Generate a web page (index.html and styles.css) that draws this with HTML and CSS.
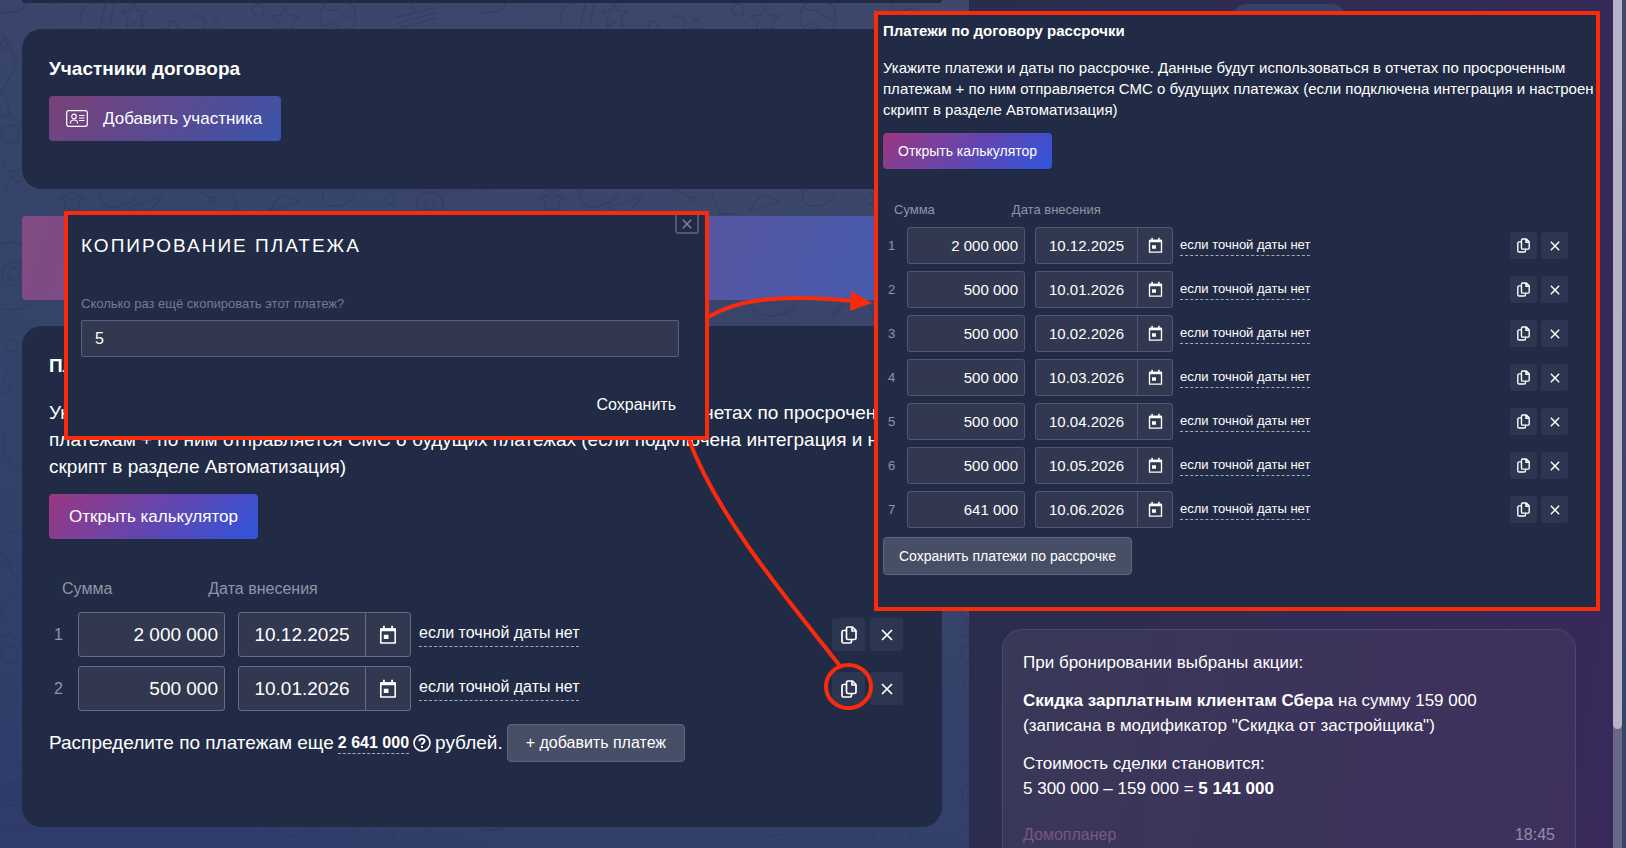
FILE: index.html
```html
<!doctype html>
<html lang="ru">
  <head>
    <meta charset="UTF-8">
    <meta name="viewport" content="width=device-width, initial-scale=1.0">
    <title>Договор рассрочки</title>
    <link rel="stylesheet" href="styles.css">
  </head>
  <body>
    <!-- icon sprite -->
    <svg class="sprite" aria-hidden="true">
      <symbol id="icon-calendar" viewBox="0 0 18 20">
        <path d="M1.800 4h14.400v14H1.800z" fill="none" stroke="currentColor" stroke-width="1.600" stroke-linejoin="round"/>
        <path d="M1.500 3.200h15v3h-15zM4 .8h1.800v3H4zM12.200 .8H14v3h-1.800zM4.800 9.800h4.700v4.200H4.800z" fill="currentColor"/>
      </symbol>
      <symbol id="icon-copy" viewBox="0 0 16 18">
        <path d="M7 1h4.500L15 4.500V12a1.500 1.500 0 0 1-1.500 1.500H7A1.500 1.500 0 0 1 5.500 12V2.500A1.500 1.500 0 0 1 7 1zM11 1.200V5H14.800" fill="none" stroke="currentColor" stroke-width="1.700" stroke-linejoin="round"/>
        <path d="M5.500 4.500h-3A1.500 1.500 0 0 0 1 6v9.500A1.500 1.500 0 0 0 2.500 17H9a1.500 1.500 0 0 0 1.500-1.500v-2" fill="none" stroke="currentColor" stroke-width="1.700" stroke-linejoin="round"/>
      </symbol>
      <symbol id="icon-close" viewBox="0 0 12 12">
        <path d="M1 1l10 10M11 1L1 11" fill="none" stroke="currentColor" stroke-width="1.700"/>
      </symbol>
      <symbol id="icon-card" viewBox="0 0 22 17">
        <g fill="none" stroke="currentColor" stroke-width="1.200" stroke-linecap="round">
          <rect x=".7" y=".7" width="20.600" height="15.600" rx="2"/>
          <circle cx="8" cy="6.500" r="2.300"/>
          <path d="M4.500 13c0-2 1.500-3 3.500-3s3.500 1 3.500 3M13.500 5.500H18M13.500 8H18M13.500 10.500H18"/>
        </g>
      </symbol>
      <symbol id="icon-help" viewBox="0 0 18 18">
        <g fill="none" stroke="currentColor" stroke-width="1.600">
          <circle cx="9" cy="9" r="8"/>
          <path d="M6.500 7.200C6.500 4 11.500 4 11.500 7c0 1.700-2.500 1.800-2.500 3.700M9 12v1.900" stroke-width="2"/>
        </g>
      </symbol>
    </svg>

    <!-- doodle wallpaper -->
    <svg class="wallpaper" aria-hidden="true">
      <defs>
        <pattern id="doodles" width="480" height="520" patternUnits="userSpaceOnUse">
          <g fill="none" stroke="#27345a" stroke-width="1.300" stroke-linejoin="round" stroke-linecap="round">
            <path d="M134 3l4 8 9 1-6 6 3 9-9-5-8 5 1-9-6-6 9-1z"/>
            <path d="M285 6l4 9 11 1-8 7 2 9-9-5-9 5 2-9-8-7 11-1z"/>
            <path d="M-3 14c14-4 24 2 28-9s20-6 26-2M0 30l18 34-18 30"/>
            <circle cx="258" cy="10" r="6"/>
            <circle cx="6" cy="44" r="5"/>
            <circle cx="338" cy="17" r="18"/>
            <path d="M324 8c8 4 14 0 18 6s8 2 12 6M326 26c8-6 12 0 16 6"/>
            <path d="M394 18l40-10M396 24l42-12M400 28l36-10M410 0l4 12"/>
            <path d="M80 24c0-12 4-18 10-20M100 28l6-26M110 24l4-20"/>
            <path d="M168 28c2-10 8-10 10 0M190 20c6-6 12-6 16 2l-4 8"/>
            <circle cx="216" cy="24" r="4"/>
            <path d="M0 88c6 10 8 20 10 26l-8 2M0 118c10-4 20 0 22 12"/>
            <circle cx="10" cy="134" r="9"/>
            <path d="M4 190l8-14 6 6 6-2M2 160c2 14 8 12 16 10"/>
            <path d="M72 188l4 8 9 1-7 6 2 9-8-5-8 5 2-9-7-6 9-1z"/>
            <path d="M100 190c-6 20 22 24 38 4M128 208l34-12-16 20zM196 190l16 8M232 194l8 20h14"/>
            <circle cx="214" cy="200" r="3"/>
            <circle cx="390" cy="199" r="5"/>
            <path d="M268 212l14-18 18 8zM326 188c-14 20 18 26 30 6"/>
            <circle cx="430" cy="205" r="13"/>
            <circle cx="430" cy="205" r="5"/>
            <circle cx="14" cy="274" r="6"/><circle cx="14" cy="274" r="12"/>
            <path d="M0 244c16-6 36 4 40 20M0 308c14 4 26 2 34-8"/>
            <path d="M270 304c8 18 40 14 48-2M350 318l14-14M390 304l6 20M420 306l12 4-4 10"/>
            <circle cx="12" cy="346" r="6"/>
            <path d="M0 366l8 4-4 12 8 6-12 8M22 416c-26 10-24 46 0 54"/>
          </g>
        </pattern>
      </defs>
      <rect width="100%" height="100%" fill="url(#doodles)"/>
    </svg>

    <div class="page">
      <main class="main">
        <section class="card card-cut"></section>

        <section class="card participants">
          <h2 class="card-title">Участники договора</h2>
          <button type="button" class="btn btn-gradient btn-muted">
            <svg class="icon-card"><use href="#icon-card"/></svg>Добавить участника
          </button>
        </section>

        <div class="banner"></div>

        <section class="card payments">
          <h2 class="card-title">Платежи по договору рассрочки</h2>
          <p class="payments-text">Укажите платежи и даты по рассрочке. Данные будут использоваться в отчетах по просроченным<br>платежам + по ним отправляется СМС о будущих платежах (если подключена интеграция и настроен<br>скрипт в разделе Автоматизация)</p>
          <button type="button" class="btn btn-gradient">Открыть калькулятор</button>
          <div class="payments-head"><span>Сумма</span><span>Дата внесения</span></div>
          <ol class="payments-list">
            <li class="payment">
              <span class="payment-num">1</span>
              <input class="payment-sum" type="text" aria-label="Сумма" value="2 000 000">
              <span class="payment-date">
                <input type="text" aria-label="Дата внесения" value="10.12.2025">
                <button type="button" aria-label="Выбрать дату"><svg class="icon-calendar"><use href="#icon-calendar"/></svg></button>
              </span>
              <a class="payment-link" href="#">если точной даты нет</a>
              <span class="payment-actions">
                <button type="button" aria-label="Копировать"><svg class="icon-copy"><use href="#icon-copy"/></svg></button>
                <button type="button" aria-label="Удалить"><svg class="icon-close"><use href="#icon-close"/></svg></button>
              </span>
            </li>
            <li class="payment">
              <span class="payment-num">2</span>
              <input class="payment-sum" type="text" aria-label="Сумма" value="500 000">
              <span class="payment-date">
                <input type="text" aria-label="Дата внесения" value="10.01.2026">
                <button type="button" aria-label="Выбрать дату"><svg class="icon-calendar"><use href="#icon-calendar"/></svg></button>
              </span>
              <a class="payment-link" href="#">если точной даты нет</a>
              <span class="payment-actions">
                <button type="button" aria-label="Копировать"><svg class="icon-copy"><use href="#icon-copy"/></svg></button>
                <button type="button" aria-label="Удалить"><svg class="icon-close"><use href="#icon-close"/></svg></button>
              </span>
            </li>
          </ol>
          <div class="rest">
            <span>Распределите по платежам еще</span>
            <a class="rest-sum" href="#">2 641 000</a>
            <svg class="icon-help"><use href="#icon-help"/></svg>
            <span>рублей.</span>
            <button type="button" class="btn btn-gray">+ добавить платеж</button>
          </div>
        </section>
      </main>

      <aside class="sidebar">
        <div class="sidebar-pill"></div>
        <article class="message">
          <p>При бронировании выбраны акции:</p>
          <p><b>Скидка зарплатным клиентам Сбера</b> на сумму 159 000<br>(записана в модификатор "Скидка от застройщика")</p>
          <p>Стоимость сделки становится:<br>5 300 000 – 159 000 = <b>5 141 000</b></p>
          <footer class="message-footer"><span class="message-author">Домопланер</span><time>18:45</time></footer>
        </article>
      </aside>
      <div class="scrollbar"><div class="scrollbar-thumb"></div></div>
    </div>

    <!-- copy dialog -->
    <form class="callout dialog">
      <button type="button" class="dialog-close" aria-label="Закрыть"><svg class="icon-close"><use href="#icon-close"/></svg></button>
      <h3 class="dialog-title">Копирование платежа</h3>
      <label class="dialog-label" for="copies">Сколько раз ещё скопировать этот платеж?</label>
      <input class="dialog-input" id="copies" type="text" value="5">
      <button type="button" class="dialog-save">Сохранить</button>
    </form>

    <!-- result after copying -->
    <section class="callout payments payments-compact">
      <h2 class="card-title">Платежи по договору рассрочки</h2>
      <p class="payments-text">Укажите платежи и даты по рассрочке. Данные будут использоваться в отчетах по просроченным<br>платежам + по ним отправляется СМС о будущих платежах (если подключена интеграция и настроен<br>скрипт в разделе Автоматизация)</p>
      <button type="button" class="btn btn-gradient">Открыть калькулятор</button>
      <div class="payments-head"><span>Сумма</span><span>Дата внесения</span></div>
      <ol class="payments-list" id="result-list"></ol>
      <button type="button" class="btn btn-gray">Сохранить платежи по рассрочке</button>
    </section>

    <svg class="arrows" aria-hidden="true">
      <g fill="none" stroke="#fa2a0c" stroke-width="4">
        <path d="M708 317C735 301 775 293 853 301"/>
        <path d="M689 440C720 522 795 608 840 666"/>
        <ellipse cx="848.500" cy="686.500" rx="22.500" ry="21.500"/>
      </g>
      <path d="M851 291l21 12-22 8z" fill="#fa2a0c"/>
    </svg>

    <script src="script.js"></script>
  </body>
</html>
```
FILE: styles.css
```css
* {
  margin: 0;
  padding: 0;
  box-sizing: border-box;
}

body {
  height: 100vh;
  overflow: hidden;
  position: relative;
  font-family: "Liberation Sans", Arial, sans-serif;
  color: #ffffff;
  background: linear-gradient(200deg, #424a6a 0%, #37446a 50%, #2f3c6a 100%);
}

button,
input {
  font-family: inherit;
  color: inherit;
}

button {
  cursor: pointer;
}

a {
  color: inherit;
  text-decoration: none;
}

.sprite {
  position: absolute;
  width: 0;
  height: 0;
}

.wallpaper {
  position: absolute;
  width: 100%;
  height: 100%;
  opacity: 0.4;
}

.page {
  position: relative;
  display: flex;
  height: 100vh;
  padding-right: 4px;
}

.main {
  flex: 1;
  min-width: 0;
  padding: 0 27px 0 22px;
}

.card {
  background: #222b45;
  border-radius: 20px;
}

.card-cut {
  height: 3px;
  border-radius: 0 0 20px 20px;
  margin-bottom: 26px;
}

.card-title {
  font-size: 19px;
  line-height: 24px;
  font-weight: bold;
  white-space: nowrap;
}

.participants {
  height: 160px;
  padding: 28px 27px;
}

.participants .btn {
  margin-top: 15px;
}

.banner {
  height: 84px;
  margin: 27px 0 26px;
  border-radius: 4px;
  background: linear-gradient(110deg, #824a82 0%, #5457a3 75%, #435cb0 100%);
}

.btn {
  display: inline-flex;
  align-items: center;
  height: 45px;
  padding: 0 20px;
  border: none;
  border-radius: 4px;
  font-size: 17px;
  white-space: nowrap;
}

.btn-gradient {
  background: linear-gradient(135deg, #9a3780 0%, #2f55dc 100%);
}

.btn-muted {
  padding: 0 19px 0 17px;
  background: linear-gradient(135deg, #7a4178 0%, #3a54aa 100%);
}

.btn-gray {
  height: 38px;
  padding: 0 18px;
  border: 1px solid #5d657f;
  background: #474f66;
  font-size: 16px;
}

.icon-card {
  width: 22px;
  height: 17px;
  margin-right: 15px;
}

/* payments block */
.payments {
  padding: 28px 0 65px 27px;
}

.payments-text {
  margin-top: 21px;
  font-size: 19px;
  line-height: 27px;
  white-space: nowrap;
}

.payments > .btn-gradient {
  margin-top: 14px;
}

.payments-head {
  display: flex;
  gap: 96px;
  margin-top: 39px;
  padding-left: 13px;
  font-size: 16px;
  line-height: 22px;
  color: #8f95a5;
}

.payments-list {
  list-style: none;
  display: grid;
  gap: 9px;
  margin-top: 12px;
  padding-right: 39px;
}

.payment {
  display: flex;
  align-items: center;
}

.payment-num {
  width: 29px;
  padding-left: 5px;
  font-size: 16px;
  color: #8f95a5;
}

.payment-sum,
.payment-date {
  height: 45px;
  border: 1px solid #656c84;
  border-radius: 3px;
  background: #32384f;
  font-size: 19px;
}

.payment-sum {
  width: 147px;
  padding-right: 6px;
  text-align: right;
}

.payment-date {
  display: flex;
  width: 173px;
  margin: 0 8px 0 13px;
}

.payment-date input {
  flex: 1;
  min-width: 0;
  border: none;
  background: none;
  font-size: inherit;
  text-align: center;
}

.payment-date button {
  display: grid;
  place-items: center;
  width: 45px;
  border: none;
  border-left: 1px solid #656c84;
  background: none;
}

.icon-calendar {
  width: 18px;
  height: 20px;
}

.payment-link {
  padding-bottom: 2px;
  border-bottom: 1px dashed #a5aaba;
  font-size: 16px;
  line-height: 22px;
}

.payment-actions {
  display: flex;
  gap: 5px;
  margin-left: auto;
}

.payment-actions button {
  display: grid;
  place-items: center;
  width: 33px;
  height: 33px;
  border: none;
  border-radius: 3px;
  background: #2d3650;
}

.icon-copy {
  width: 16px;
  height: 18px;
}

.icon-close {
  width: 12px;
  height: 12px;
}

.rest {
  display: flex;
  align-items: center;
  gap: 4px;
  margin-top: 13px;
  font-size: 19px;
}

.rest-sum {
  border-bottom: 1px dashed #a5aaba;
  font-size: 16px;
  line-height: 20px;
  font-weight: bold;
}

.icon-help {
  width: 18px;
  height: 18px;
}

/* chat sidebar */
.sidebar {
  width: 644px;
  padding: 4px 37px 0 33px;
  overflow: hidden;
  background: linear-gradient(100deg, #282d4b 0%, #302c52 50%, #38295a 100%);
}

.sidebar-pill {
  width: 114px;
  height: 30px;
  margin: 0 auto;
  border-radius: 15px;
  background: #36416a;
}

.message {
  margin-top: 595px;
  padding: 20px;
  border: 1px solid #4b4a6b;
  border-radius: 20px;
  background: linear-gradient(100deg, #393857, #3f305e);
  font-size: 17px;
  line-height: 25px;
}

.message p {
  margin-bottom: 13px;
}

.message-footer {
  display: flex;
  justify-content: space-between;
  margin-top: 21px;
  font-size: 16px;
  color: #8f8da8;
}

.message-author {
  color: #7b5585;
}

.scrollbar {
  width: 9px;
  background: #6a6888;
}

.scrollbar-thumb {
  height: 86%;
  border-radius: 0 0 5px 5px;
  background: #b6b3c6;
}

/* red outlined callouts */
.callout {
  position: absolute;
  border: 4px solid #fa2a0c;
  background: #222b45;
}

.dialog {
  top: 211px;
  left: 64px;
  width: 645px;
  height: 229px;
  padding: 19px 26px 0 13px;
}

.dialog-close {
  position: absolute;
  top: 0;
  right: 6px;
  display: grid;
  place-items: center;
  width: 24px;
  height: 19px;
  border: 2px solid #4f5872;
  border-top: none;
  border-radius: 0 0 3px 3px;
  background: none;
  color: #7d8498;
}

.dialog-close .icon-close {
  width: 10px;
  height: 10px;
}

.dialog-title {
  font-size: 19px;
  line-height: 24px;
  font-weight: normal;
  letter-spacing: 2px;
  text-transform: uppercase;
}

.dialog-label {
  display: block;
  margin-top: 36px;
  font-size: 13px;
  line-height: 20px;
  color: #747b8e;
}

.dialog-input {
  display: block;
  width: 100%;
  height: 37px;
  margin-top: 6px;
  padding: 0 13px;
  border: 1px solid #5a627b;
  border-radius: 2px;
  background: #32384f;
  font-size: 16px;
}

.dialog-save {
  display: block;
  margin: 38px 3px 0 auto;
  border: none;
  background: none;
  font-size: 16px;
  line-height: 20px;
}

/* small copy of the payments block */
.payments-compact {
  top: 11px;
  left: 874px;
  width: 726px;
  height: 600px;
  padding: 6px 0 0 5px;
}

.payments-compact .card-title {
  font-size: 15px;
  line-height: 20px;
}

.payments-compact .payments-text {
  margin-top: 16px;
  font-size: 15px;
  line-height: 21px;
}

.payments-compact .btn {
  height: 36px;
  padding: 0 15px;
  font-size: 14px;
}

.payments-compact > .btn-gradient {
  margin-top: 13px;
}

.payments-compact .payments-head {
  gap: 77px;
  margin-top: 32px;
  padding-left: 11px;
  font-size: 13px;
  line-height: 18px;
}

.payments-compact .payments-list {
  gap: 7px;
  margin-top: 8px;
  padding-right: 28px;
}

.payments-compact .payment-num {
  width: 24px;
  font-size: 13px;
}

.payments-compact .payment-sum,
.payments-compact .payment-date {
  height: 37px;
  border-color: #4f5872;
  font-size: 15px;
}

.payments-compact .payment-sum {
  width: 118px;
}

.payments-compact .payment-date {
  width: 138px;
  margin: 0 7px 0 10px;
}

.payments-compact .payment-date button {
  width: 35px;
  border-color: #4f5872;
}

.payments-compact .icon-calendar {
  width: 15px;
  height: 17px;
}

.payments-compact .payment-link {
  padding-bottom: 1px;
  font-size: 13px;
  line-height: 18px;
}

.payments-compact .payment-actions {
  gap: 4px;
}

.payments-compact .payment-actions button {
  width: 27px;
  height: 27px;
}

.payments-compact .icon-copy {
  width: 13px;
  height: 15px;
}

.payments-compact .icon-close {
  width: 10px;
  height: 10px;
}

.payments-compact .btn-gray {
  height: 38px;
  margin-top: 9px;
}

.arrows {
  position: absolute;
  top: 0;
  left: 0;
  width: 100%;
  height: 100%;
  pointer-events: none;
}
```
FILE: script.js
```js
const payments = [
  ["2 000 000", "10.12.2025"],
  ["500 000", "10.01.2026"],
  ["500 000", "10.02.2026"],
  ["500 000", "10.03.2026"],
  ["500 000", "10.04.2026"],
  ["500 000", "10.05.2026"],
  ["641 000", "10.06.2026"],
];

const template = document.querySelector(".payment");
const list = document.getElementById("result-list");

payments.forEach(([sum, date], i) => {
  const row = template.cloneNode(true);
  row.querySelector(".payment-num").textContent = i + 1;
  row.querySelector(".payment-sum").value = sum;
  row.querySelector(".payment-date input").value = date;
  list.appendChild(row);
});
```
